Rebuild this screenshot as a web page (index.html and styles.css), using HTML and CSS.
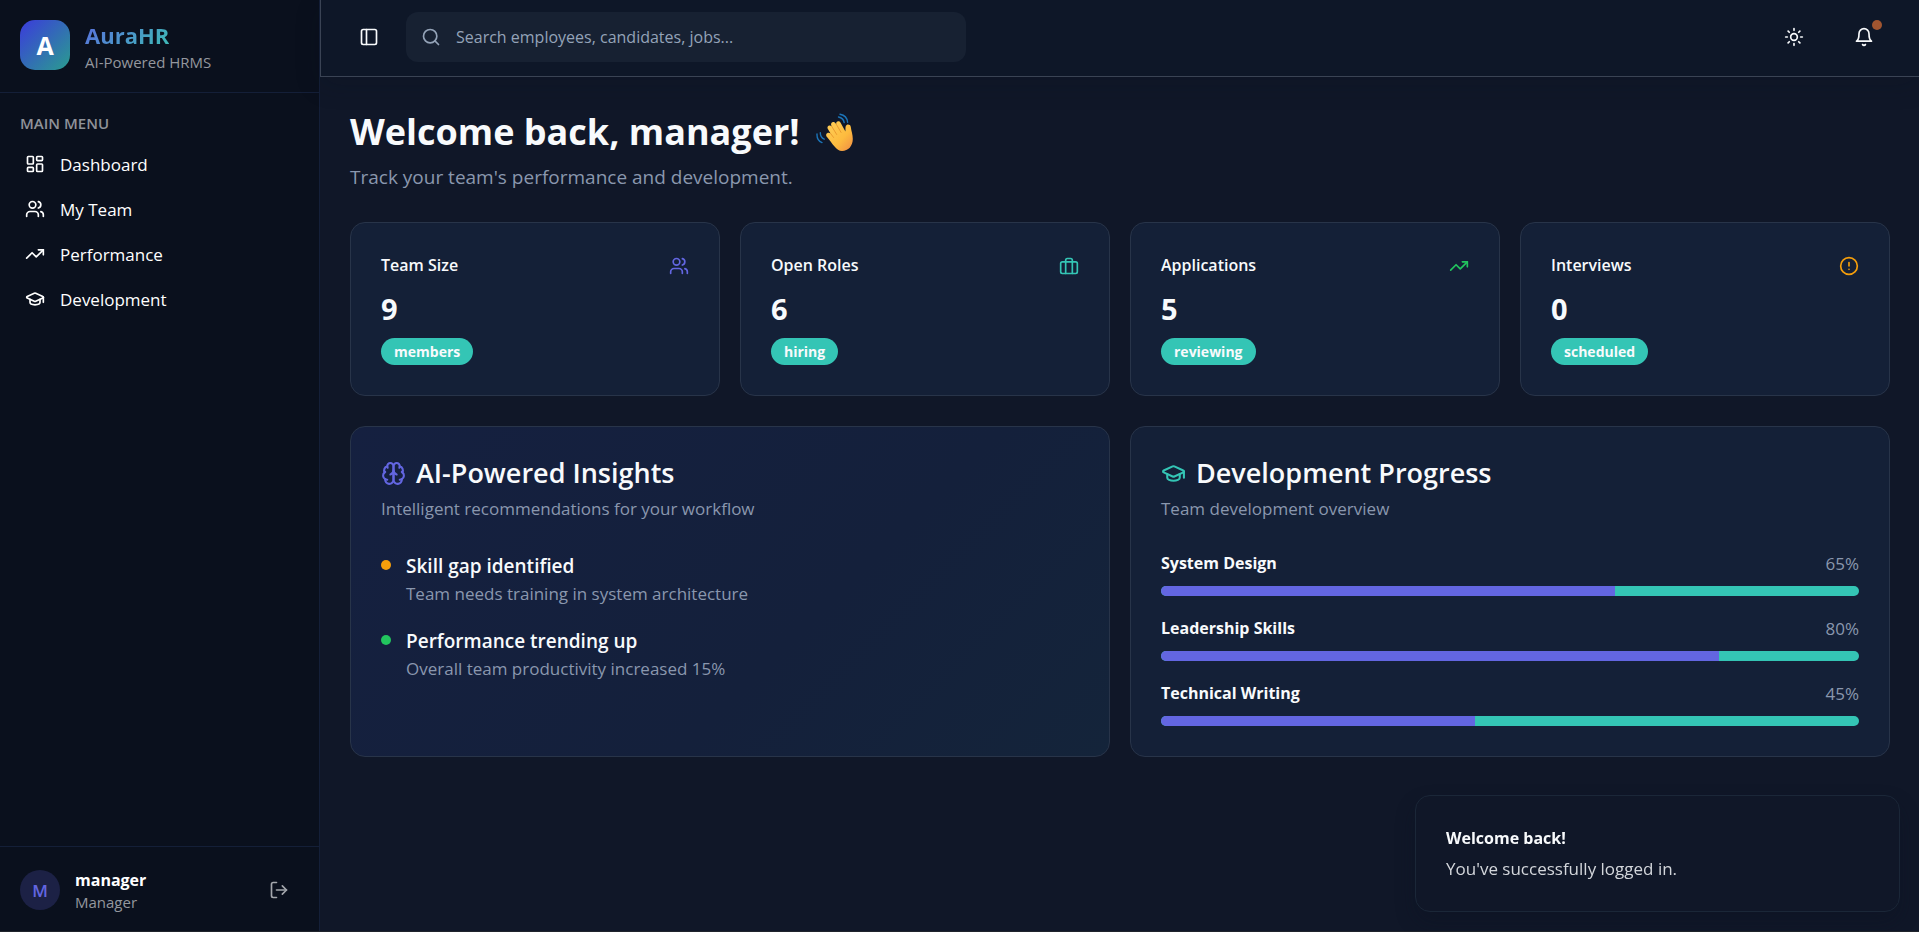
FILE: index.html
```html
<!DOCTYPE html>
<html lang="en">
<head>
<meta charset="utf-8">
<meta name="viewport" content="width=device-width, initial-scale=1">
<title>AuraHR</title>
<link rel="stylesheet" href="styles.css">
</head>
<body>
<svg class="sprite" aria-hidden="true">
  <symbol id="i-users" viewBox="0 0 24 24"><path d="M16 21v-2a4 4 0 0 0-4-4H6a4 4 0 0 0-4 4v2"/><circle cx="9" cy="7" r="4"/><path d="M22 21v-2a4 4 0 0 0-3-3.87"/><path d="M16 3.13a4 4 0 0 1 0 7.75"/></symbol>
  <symbol id="i-trend" viewBox="0 0 24 24"><polyline points="22 7 13.5 15.5 8.5 10.5 2 17"/><polyline points="16 7 22 7 22 13"/></symbol>
  <symbol id="i-cap" viewBox="0 0 24 24"><path d="M21.42 10.922a1 1 0 0 0-.019-1.838L12.83 5.18a2 2 0 0 0-1.66 0L2.6 9.08a1 1 0 0 0 0 1.832l8.57 3.908a2 2 0 0 0 1.66 0z"/><path d="M22 10v6"/><path d="M6 12.5V16a6 3 0 0 0 12 0v-3.5"/></symbol>
</svg>
<div class="app">
  <aside class="sidebar">
    <div class="brand">
      <div class="logo">A</div>
      <div>
        <div class="brand-name">AuraHR</div>
        <div class="brand-sub">AI-Powered HRMS</div>
      </div>
    </div>
    <nav class="menu">
      <h2 class="menu-title">MAIN MENU</h2>
      <a class="menu-item" href="#"><svg class="icon" viewBox="0 0 24 24"><rect width="7" height="9" x="3" y="3" rx="1"/><rect width="7" height="5" x="14" y="3" rx="1"/><rect width="7" height="9" x="14" y="12" rx="1"/><rect width="7" height="5" x="3" y="16" rx="1"/></svg>Dashboard</a>
      <a class="menu-item" href="#"><svg class="icon"><use href="#i-users"/></svg>My Team</a>
      <a class="menu-item" href="#"><svg class="icon"><use href="#i-trend"/></svg>Performance</a>
      <a class="menu-item" href="#"><svg class="icon"><use href="#i-cap"/></svg>Development</a>
    </nav>
    <div class="account">
      <div class="avatar">M</div>
      <div class="account-text">
        <div class="account-name">manager</div>
        <div class="account-role">Manager</div>
      </div>
      <button class="icon-button logout" aria-label="Log out"><svg class="icon" viewBox="0 0 24 24"><path d="M9 21H5a2 2 0 0 1-2-2V5a2 2 0 0 1 2-2h4"/><polyline points="16 17 21 12 16 7"/><line x1="21" x2="9" y1="12" y2="12"/></svg></button>
    </div>
  </aside>
  <div class="main">
    <header class="topbar">
      <button class="icon-button" aria-label="Toggle sidebar"><svg class="icon" viewBox="0 0 24 24"><rect width="18" height="18" x="3" y="3" rx="2"/><path d="M9 3v18"/></svg></button>
      <label class="search">
        <svg class="icon" viewBox="0 0 24 24"><circle cx="11" cy="11" r="8"/><path d="m21 21-4.3-4.3"/></svg>
        <input type="text" aria-label="Search" placeholder="Search employees, candidates, jobs...">
      </label>
      <div class="actions">
        <button class="icon-button" aria-label="Switch theme"><svg class="icon" viewBox="0 0 24 24"><circle cx="12" cy="12" r="4"/><path d="M12 2v2"/><path d="M12 20v2"/><path d="m4.93 4.93 1.41 1.41"/><path d="m17.66 17.66 1.41 1.41"/><path d="M2 12h2"/><path d="M20 12h2"/><path d="m6.34 17.66-1.41 1.41"/><path d="m19.07 4.93-1.41 1.41"/></svg></button>
        <button class="icon-button bell" aria-label="Notifications"><svg class="icon" viewBox="0 0 24 24"><path d="M6 8a6 6 0 0 1 12 0c0 7 3 9 3 9H3s3-2 3-9"/><path d="M10.3 21a1.94 1.94 0 0 0 3.4 0"/></svg><span class="bell-dot"></span></button>
      </div>
    </header>
    <main class="content">
      <div class="intro">
        <h1 class="welcome">Welcome back, manager!
          <svg class="wave" viewBox="0 0 38 38" role="img" aria-label="Waving hand">
            <defs><linearGradient id="skin" x1="0" y1="0" x2="1" y2="1"><stop offset="0" stop-color="#ffd05a"/><stop offset=".6" stop-color="#fdbb3e"/><stop offset="1" stop-color="#ef8b45"/></linearGradient></defs>
            <g fill="none" stroke="#1b74b8" stroke-width="1.4" stroke-linecap="round"><path d="M24 1.200c4.200.800 7.200 3.600 7.600 8"/><path d="M22.500 4c3.200.600 5.200 2.600 5.700 5.600"/><path d="M1 21c-.2 4 1.500 7.200 5 8.600"/><path d="M4.300 19.800c0 3 1.200 5.200 3.900 6.400"/></g>
            <path fill="url(#skin)" d="M11.200 24.200c-2.800-2.900.600-6 3.400-3.700l-2.700-4.600c-1.500-2.800 1.900-4.900 3.900-2.400l-.5-1c-1.300-3.100 2.300-5 4.200-2.300l.8 1.100c-.8-3 2.700-4.200 4.300-1.600l4.800 8.700c.2-2-.2-3.700.4-5.300.9-2.500 4.600-1.900 5 .8.500 4 2 7.500 2 12.100 0 7-4.600 12-10.700 12-5.700 0-10-8-14.900-13.800z"/>
            <g fill="none" stroke="#e8962c" stroke-width=".9" stroke-linecap="round"><path d="m15.800 13.500 4.900 8"/><path d="m20.300 11.300 4.800 8.200"/><path d="m14.600 20.500 3 4"/></g>
          </svg>
        </h1>
        <p class="lead">Track your team's performance and development.</p>
      </div>
      <section class="stats">
        <article class="card stat">
          <div class="stat-head"><h3 class="stat-label">Team Size</h3><svg class="icon indigo"><use href="#i-users"/></svg></div>
          <div class="stat-value">9</div>
          <span class="badge">members</span>
        </article>
        <article class="card stat">
          <div class="stat-head"><h3 class="stat-label">Open Roles</h3><svg class="icon teal" viewBox="0 0 24 24"><rect width="20" height="14" x="2" y="7" rx="2"/><path d="M16 21V5a2 2 0 0 0-2-2h-4a2 2 0 0 0-2 2v16"/></svg></div>
          <div class="stat-value">6</div>
          <span class="badge">hiring</span>
        </article>
        <article class="card stat">
          <div class="stat-head"><h3 class="stat-label">Applications</h3><svg class="icon green"><use href="#i-trend"/></svg></div>
          <div class="stat-value">5</div>
          <span class="badge">reviewing</span>
        </article>
        <article class="card stat">
          <div class="stat-head"><h3 class="stat-label">Interviews</h3><svg class="icon amber" viewBox="0 0 24 24"><circle cx="12" cy="12" r="10"/><line x1="12" x2="12" y1="8" y2="12"/><line x1="12" x2="12.010" y1="16" y2="16"/></svg></div>
          <div class="stat-value">0</div>
          <span class="badge">scheduled</span>
        </article>
      </section>
      <section class="panels">
        <article class="card panel insights">
          <h2 class="panel-title"><svg class="icon large indigo" viewBox="0 0 24 24"><path d="M12 5a3 3 0 1 0-5.997.125 4 4 0 0 0-2.526 5.770 4 4 0 0 0 .556 6.588A4 4 0 1 0 12 18Z"/><path d="M12 5a3 3 0 1 1 5.997.125 4 4 0 0 1 2.526 5.770 4 4 0 0 1-.556 6.588A4 4 0 1 1 12 18Z"/><path d="M15 13a4.500 4.500 0 0 1-3-4 4.500 4.500 0 0 1-3 4"/><path d="M17.599 6.500a3 3 0 0 0 .399-1.375"/><path d="M6.003 5.125A3 3 0 0 0 6.401 6.500"/><path d="M3.477 10.896a4 4 0 0 1 .585-.396"/><path d="M19.938 10.500a4 4 0 0 1 .585.396"/><path d="M6 18a4 4 0 0 1-1.967-.516"/><path d="M19.967 17.484A4 4 0 0 1 18 18"/></svg>AI-Powered Insights</h2>
          <p class="panel-sub">Intelligent recommendations for your workflow</p>
          <ul class="insight-list">
            <li class="insight"><span class="dot dot-amber"></span><div><h3 class="insight-title">Skill gap identified</h3><p class="insight-text">Team needs training in system architecture</p></div></li>
            <li class="insight"><span class="dot dot-green"></span><div><h3 class="insight-title">Performance trending up</h3><p class="insight-text">Overall team productivity increased 15%</p></div></li>
          </ul>
        </article>
        <article class="card panel">
          <h2 class="panel-title"><svg class="icon large teal"><use href="#i-cap"/></svg>Development Progress</h2>
          <p class="panel-sub">Team development overview</p>
          <div class="skills">
            <div class="skill"><div class="skill-row"><span class="skill-name">System Design</span><span class="skill-value">65%</span></div><div class="bar"><div class="bar-fill" style="width:65%"></div></div></div>
            <div class="skill"><div class="skill-row"><span class="skill-name">Leadership Skills</span><span class="skill-value">80%</span></div><div class="bar"><div class="bar-fill" style="width:80%"></div></div></div>
            <div class="skill"><div class="skill-row"><span class="skill-name">Technical Writing</span><span class="skill-value">45%</span></div><div class="bar"><div class="bar-fill" style="width:45%"></div></div></div>
          </div>
        </article>
      </section>
    </main>
  </div>
  <div class="toast" role="status">
    <div class="toast-title">Welcome back!</div>
    <div class="toast-text">You've successfully logged in.</div>
  </div>
</div>
</body>
</html>
```
FILE: styles.css
```css
* { box-sizing: border-box; }
body, h1, h2, h3, p, ul { margin: 0; padding: 0; }
body {
  background: #101728;
  color: #f8fafc;
  font: 400 17px/25px "Open Sans", "Noto Sans", sans-serif;
}
button, input { font: inherit; color: inherit; background: none; border: 0; padding: 0; }
.sprite { display: none; }
.app { display: flex; min-height: 100vh; border-bottom: 1px solid #20242c; }
.icon {
  width: 20px;
  height: 20px;
  flex: none;
  fill: none;
  stroke: currentColor;
  stroke-width: 2;
  stroke-linecap: round;
  stroke-linejoin: round;
}
.icon.large { width: 25px; height: 25px; }
.indigo { color: #6366e1; }
.teal { color: #34c5b5; }
.green { color: #22c55e; }
.amber { color: #f59e0b; }
.icon-button { display: grid; place-items: center; width: 50px; height: 50px; border-radius: 12px; }

.sidebar {
  display: flex;
  flex: none;
  flex-direction: column;
  width: 320px;
  background: #0a101d;
  border-right: 1px solid #141f38;
}
.brand { display: flex; align-items: flex-start; gap: 15px; padding: 20px 20px 19px; border-bottom: 1px solid #141f38; }
.logo {
  display: grid;
  place-items: center;
  width: 50px;
  height: 50px;
  border-radius: 15px;
  background: linear-gradient(135deg, #3b3bdc, #2a9d8f);
  color: #fff;
  font-size: 25px;
  font-weight: 700;
}
.brand-name {
  width: max-content;
  font-size: 22px;
  font-weight: 700;
  line-height: 31px;
  background: linear-gradient(135deg, #5b6ee0, #3cbcb4);
  background-clip: text;
  color: transparent;
}
.brand-sub { font-size: 15px; line-height: 22px; color: #94979e; }
.menu { display: flex; flex: 1; flex-direction: column; gap: 5px; padding: 10px; }
.menu-title { padding: 8px 10px 4px; font-size: 15px; font-weight: 600; line-height: 24px; color: #8f9299; }
.menu-item { display: flex; align-items: center; gap: 15px; height: 40px; padding: 0 15px; color: #fff; text-decoration: none; }
.account { display: flex; align-items: center; gap: 15px; padding: 21px 20px 19px; border-top: 1px solid #141f38; }
.avatar { display: grid; place-items: center; width: 40px; height: 40px; border-radius: 50%; background: #1c2145; color: #6366e1; font-weight: 600; }
.account-text { flex: 1; }
.account-name { font-size: 16px; font-weight: 700; line-height: 24px; color: #fff; }
.account-role { font-size: 15px; line-height: 20px; color: #94979e; }
.logout { width: 40px; height: 40px; color: #a3a6ac; }

.main { flex: 1; min-width: 0; }
.topbar {
  display: flex;
  align-items: center;
  height: 77px;
  padding: 0 30px 2px 23px;
  background: #0e1728;
  border: solid #3a4354;
  border-width: 0 0 1px 1px;
  box-shadow: 0 8px 24px #0c122033;
}
.search {
  display: flex;
  align-items: center;
  gap: 15px;
  width: 560px;
  height: 50px;
  margin-left: 12px;
  padding: 0 15px;
  border-radius: 12px;
  background: #172132;
  color: #94a3b8;
}
.search input { flex: 1; min-width: 0; outline: 0; font-size: 16px; line-height: 25px; }
.search input::placeholder { color: #94a3b8; opacity: 1; }
.actions { display: flex; gap: 20px; margin-left: auto; }
.bell { position: relative; }
.bell-dot { position: absolute; top: 8px; right: 7px; width: 10px; height: 10px; border-radius: 50%; background: #a05530; }

.content { display: grid; gap: 30px; padding: 30px 29px 30px 30px; }
.welcome { display: flex; align-items: center; gap: 16px; font-size: 36px; font-weight: 700; line-height: 50px; }
.wave { width: 38px; height: 38px; }
.lead { margin-top: 5px; font-size: 19px; line-height: 30px; color: #8a97ae; }
.card { border: 1px solid #283449; border-radius: 15px; background: #142037; }
.stats { display: grid; grid-template-columns: repeat(4, 1fr); gap: 20px; }
.stat { padding: 30px; }
.stat-head { display: flex; align-items: center; justify-content: space-between; }
.stat-label { font-size: 16px; font-weight: 600; line-height: 25px; }
.stat-value { margin-top: 11px; font-size: 29px; font-weight: 700; line-height: 40px; }
.badge { display: block; width: max-content; margin-top: 9px; padding: 0 13px; border-radius: 14px; background: #34c5b5; font-size: 14px; font-weight: 700; line-height: 27px; }
.panels { display: grid; grid-template-columns: repeat(2, 1fr); gap: 20px; }
.panel { padding: 30px; }
.insights { background: linear-gradient(135deg, #152040, #14203b 60%, #14243a); }
.panel-title { display: flex; align-items: center; gap: 10px; font-size: 27px; font-weight: 600; line-height: 32px; }
.panel-sub { margin-top: 7px; font-size: 17px; color: #8a97ae; }
.insight-list { display: grid; gap: 20px; margin-top: 30px; list-style: none; }
.insight { display: flex; gap: 15px; }
.dot { flex: none; width: 10px; height: 10px; margin-top: 9px; border-radius: 50%; }
.dot-amber { background: #f59e0b; }
.dot-green { background: #22c55e; }
.insight-title { font-size: 19px; font-weight: 600; line-height: 30px; }
.insight-text { color: #8a97ae; }
.skills { display: grid; gap: 20px; margin-top: 30px; }
.skill-row { display: flex; justify-content: space-between; }
.skill-name { font-size: 16px; font-weight: 700; }
.skill-value { color: #8a97ae; }
.bar { height: 10px; margin-top: 10px; overflow: hidden; border-radius: 5px; background: #34c5b5; }
.bar-fill { height: 100%; background: #6366e1; }

.toast {
  position: fixed;
  right: 19px;
  bottom: 20px;
  width: 485px;
  padding: 30px;
  border: 1px solid #1b2738;
  border-radius: 15px;
  background: #101728;
  box-shadow: 0 10px 20px #0c122055;
}
.toast-title { font-size: 16px; font-weight: 700; }
.toast-text { margin-top: 5px; color: #d3d6db; }
```
